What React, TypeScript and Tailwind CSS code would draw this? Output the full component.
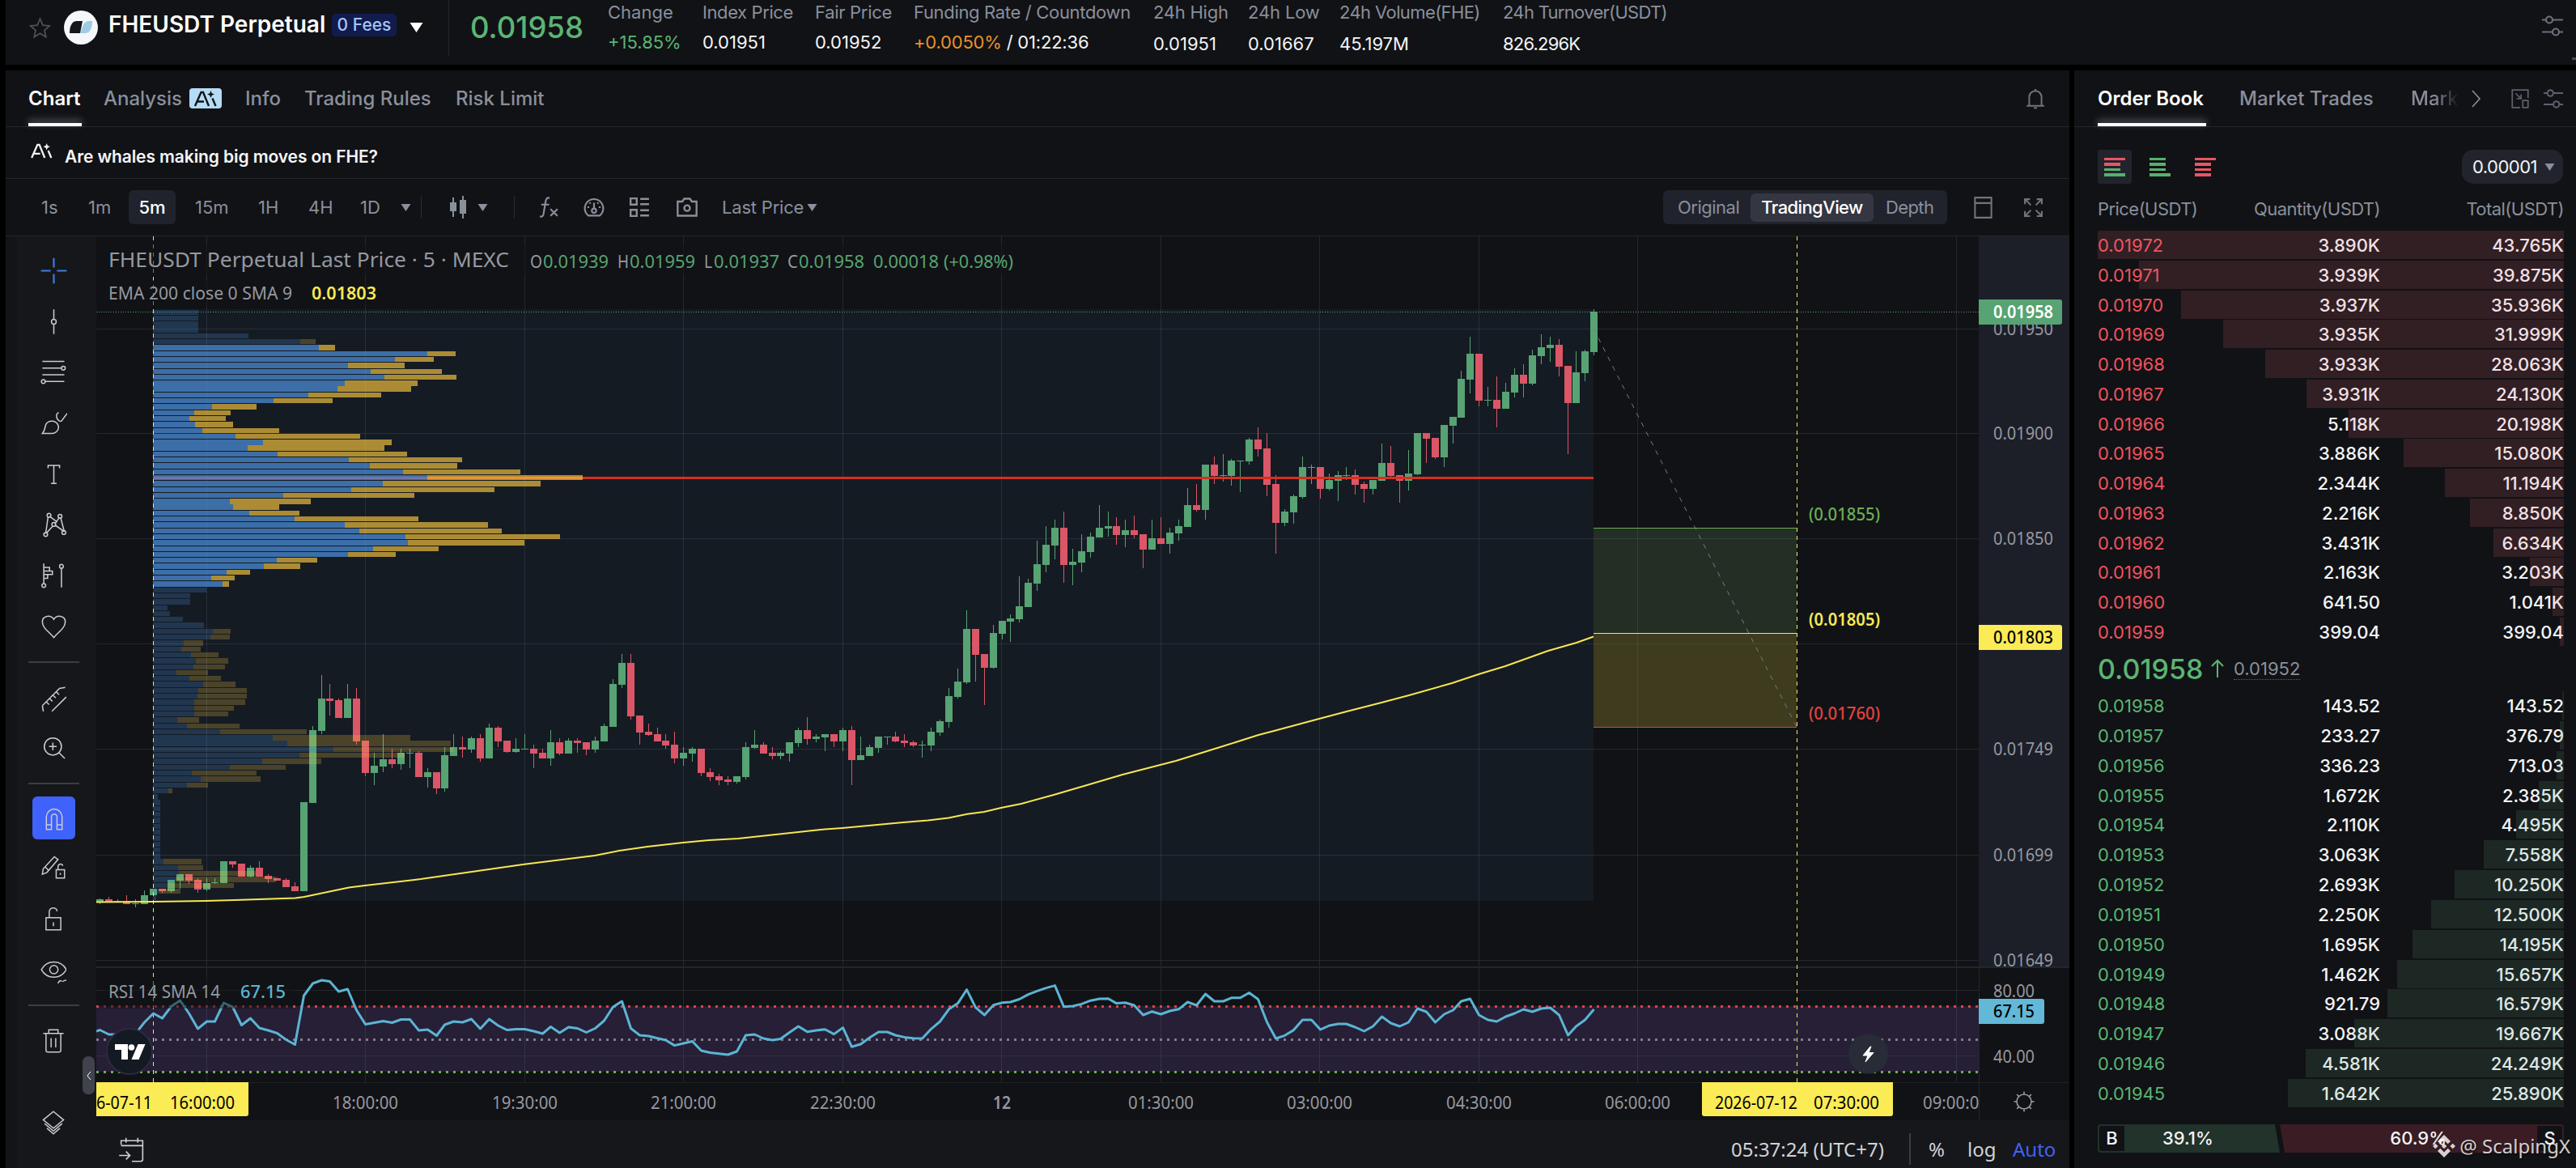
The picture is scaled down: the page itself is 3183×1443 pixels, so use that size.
import React from "react";

const UP = "#57a373";
const DOWN = "#db5667";

/* ---------- chart data (page pixel coordinates) ---------- */

const slotX = (k: number) => Math.round(189 + 10.922 * k);

// [direction, high, bodyTop, bodyBottom, low], first candle is slot -6
type Candle = [0 | 1, number, number, number, number];
const candles: Candle[] = [
  [1, 1110, 1111, 1114, 1117], [0, 1108, 1111, 1114, 1115], [1, 1111, 1113, 1114, 1115], [0, 1106, 1113, 1117, 1117],
  [1, 1111, 1116, 1117, 1121], [1, 1100, 1106, 1117, 1117], [1, 1098, 1098, 1106, 1106], [0, 1098, 1098, 1101, 1103],
  [1, 1087, 1087, 1101, 1103], [1, 1080, 1080, 1088, 1098], [0, 1080, 1080, 1088, 1092], [0, 1085, 1087, 1099, 1103],
  [1, 1085, 1091, 1099, 1101], [1, 1085, 1090, 1091, 1092], [1, 1064, 1064, 1091, 1091], [0, 1064, 1064, 1068, 1072],
  [0, 1067, 1067, 1083, 1083], [1, 1069, 1072, 1083, 1084], [0, 1064, 1072, 1083, 1083], [0, 1080, 1082, 1086, 1091],
  [0, 1084, 1085, 1088, 1088], [0, 1085, 1087, 1096, 1096], [0, 1090, 1095, 1101, 1101], [1, 991, 991, 1101, 1101],
  [1, 897, 902, 992, 992], [1, 834, 863, 903, 907], [0, 845, 863, 866, 884], [0, 863, 865, 887, 887],
  [1, 845, 863, 887, 887], [0, 850, 863, 916, 920], [0, 915, 915, 955, 959], [1, 930, 946, 955, 970],
  [1, 907, 938, 947, 954], [0, 925, 938, 944, 949], [1, 925, 930, 944, 951], [1, 925, 930, 931, 949],
  [0, 928, 930, 960, 960], [1, 949, 954, 960, 973], [0, 954, 954, 974, 981], [1, 923, 933, 974, 978],
  [1, 907, 923, 934, 934], [0, 910, 923, 926, 936], [1, 910, 912, 926, 930], [0, 907, 912, 937, 941],
  [1, 894, 899, 937, 937], [0, 897, 899, 916, 923], [0, 915, 915, 929, 930], [1, 912, 925, 929, 930],
  [1, 907, 925, 926, 926], [0, 920, 925, 931, 949], [0, 925, 930, 937, 937], [1, 902, 917, 937, 946],
  [0, 912, 917, 931, 933], [1, 912, 915, 931, 931], [0, 912, 915, 918, 930], [0, 917, 917, 926, 933],
  [1, 910, 915, 926, 930], [1, 894, 897, 916, 916], [1, 839, 845, 898, 898], [1, 808, 819, 846, 850],
  [0, 808, 819, 885, 889], [0, 884, 884, 905, 920], [0, 894, 904, 908, 909], [0, 899, 907, 916, 916],
  [0, 907, 915, 921, 925], [0, 904, 920, 937, 943], [1, 923, 930, 937, 946], [1, 923, 925, 931, 941],
  [0, 925, 925, 955, 959], [0, 949, 954, 960, 965], [0, 956, 959, 964, 970], [0, 959, 963, 966, 970],
  [1, 959, 959, 966, 968], [1, 917, 923, 960, 963], [1, 902, 920, 924, 925], [0, 917, 920, 931, 931],
  [0, 923, 930, 934, 938], [1, 928, 930, 934, 938], [1, 917, 917, 931, 941], [1, 899, 902, 918, 923],
  [0, 886, 902, 913, 920], [1, 907, 910, 913, 917], [1, 907, 907, 911, 928], [0, 907, 907, 916, 923],
  [1, 899, 902, 916, 928], [0, 897, 902, 939, 970], [1, 910, 933, 939, 939], [1, 920, 923, 934, 934],
  [1, 910, 910, 924, 930], [1, 910, 910, 911, 920], [0, 904, 910, 916, 917], [0, 907, 915, 918, 923],
  [0, 915, 917, 921, 923], [1, 915, 920, 921, 936], [1, 899, 904, 921, 928], [1, 889, 891, 905, 909],
  [1, 850, 860, 892, 899], [1, 826, 842, 861, 863], [1, 754, 777, 843, 845], [0, 777, 777, 809, 842],
  [0, 808, 808, 825, 871], [1, 772, 782, 825, 826], [1, 767, 767, 783, 790], [1, 759, 764, 768, 793],
  [1, 712, 749, 765, 769], [1, 715, 720, 750, 750], [1, 668, 697, 721, 730], [1, 650, 673, 698, 707],
  [1, 642, 652, 674, 691], [0, 632, 652, 698, 720], [1, 678, 694, 698, 723], [1, 660, 681, 695, 707],
  [1, 658, 663, 682, 689], [1, 624, 652, 664, 664], [1, 632, 650, 653, 663], [0, 639, 650, 661, 673],
  [1, 642, 655, 661, 676], [0, 637, 655, 661, 665], [0, 660, 660, 679, 702], [1, 642, 665, 679, 679],
  [0, 639, 665, 672, 672], [1, 652, 658, 672, 684], [1, 642, 650, 659, 668], [1, 603, 624, 651, 651],
  [0, 598, 624, 630, 632], [1, 574, 574, 630, 642], [0, 564, 574, 588, 598], [1, 561, 587, 588, 595],
  [1, 567, 569, 588, 600], [1, 569, 569, 570, 608], [1, 541, 543, 570, 574], [0, 528, 543, 555, 564],
  [0, 535, 554, 599, 613], [0, 587, 598, 646, 684], [1, 629, 632, 646, 650], [1, 611, 613, 633, 647],
  [1, 564, 577, 614, 616], [1, 574, 577, 578, 598], [0, 577, 577, 604, 616], [1, 585, 593, 604, 606],
  [1, 582, 587, 594, 619], [1, 577, 587, 588, 593], [0, 580, 587, 599, 611], [0, 595, 598, 604, 621],
  [1, 593, 593, 604, 611], [1, 548, 572, 594, 594], [0, 551, 572, 588, 589], [0, 587, 587, 594, 621],
  [1, 556, 585, 594, 606], [1, 535, 535, 586, 587], [0, 535, 535, 542, 572], [0, 541, 541, 565, 567],
  [1, 525, 525, 565, 577], [1, 515, 515, 526, 548], [1, 458, 468, 516, 516], [1, 416, 437, 469, 486],
  [0, 437, 437, 495, 502], [1, 478, 494, 495, 502], [0, 465, 494, 505, 528], [1, 473, 484, 505, 505],
  [1, 455, 463, 485, 491], [0, 450, 463, 474, 491], [1, 432, 439, 474, 476], [1, 413, 429, 440, 450],
  [1, 416, 426, 430, 447], [0, 419, 426, 453, 465], [0, 452, 452, 498, 561], [1, 434, 460, 498, 498],
  [1, 432, 434, 461, 471], [1, 382, 385, 435, 439],
];

// [up width, total width] for each of the 100 price rows
const profile: [number, number][] = [
  [56, 56], [56, 56], [56, 56], [56, 56], [118, 118], [182, 201],
  [205, 225], [339, 374], [299, 347], [241, 311], [269, 357], [286, 375], [237, 327], [228, 319], [192, 282], [149, 222],
  [73, 128], [51, 96], [45, 90], [52, 99], [61, 156], [102, 256], [136, 295], [117, 286], [154, 314], [242, 382],
  [268, 376], [309, 454], [339, 531], [284, 479], [245, 422], [161, 323], [95, 195], [99, 156], [119, 181], [175, 328],
  [237, 414], [255, 431], [312, 503], [315, 459], [272, 353], [241, 300], [153, 203], [137, 182], [91, 120], [72, 101],
  [86, 94],
  [66, 66], [46, 46], [46, 46], [18, 18], [21, 21], [37, 37], [63, 63], [74, 96], [71, 95], [38, 62], [35, 59],
  [47, 81], [53, 93], [50, 89], [29, 68], [45, 84], [62, 102], [56, 116], [55, 116], [51, 114], [51, 100], [51, 93],
  [30, 57], [42, 107], [83, 190], [148, 318], [166, 368], [223, 371], [181, 311], [135, 208], [95, 164], [48, 128],
  [59, 133], [42, 68], [19, 24], [6, 6], [9, 9], [9, 9], [9, 9], [9, 9], [9, 9], [9, 9], [9, 9], [9, 9], [9, 9],
  [9, 9], [13, 60], [31, 62], [32, 127], [28, 152], [19, 100], [8, 34], [4, 4],
];

const rsi = [
  1274, 1272.5, 1278, 1278, 1279, 1277, 1263, 1252, 1258, 1243.5, 1236, 1252, 1271, 1262, 1262, 1239, 1244, 1266.5, 1258,
  1270, 1273, 1276.5, 1284.5, 1290.5, 1230, 1215, 1211, 1212.5, 1225, 1222, 1248, 1265.5, 1263.5, 1261.5, 1263.5, 1259.5,
  1259.5, 1273, 1272, 1279.5, 1266, 1262, 1263, 1259, 1271, 1259, 1267, 1272.5, 1271.5, 1271.5, 1274, 1277, 1268.5, 1276,
  1269, 1270.5, 1275.5, 1270.5, 1261, 1244, 1237, 1270.5, 1279, 1280, 1282.7, 1285, 1291.6, 1289, 1286.5, 1298, 1300.5,
  1301.7, 1303, 1299, 1279, 1278, 1283, 1285, 1283.5, 1275.5, 1268, 1274.7, 1273, 1271.7, 1277.6, 1269.6, 1293.3, 1290,
  1282, 1275, 1275, 1279, 1281.4, 1282.7, 1283, 1271.3, 1262, 1246.8, 1239.6, 1222.7, 1244.7, 1254, 1241.7, 1238.7, 1238,
  1234.5, 1228.6, 1224.4, 1220.6, 1217.6, 1243.8, 1243, 1240.4, 1236.2, 1234, 1233.7, 1239.6, 1238.7, 1242, 1254, 1249.7,
  1253, 1249, 1246.8, 1238, 1242, 1228, 1237, 1237, 1232.8, 1232.8, 1226.5, 1234.5, 1262.8, 1283, 1279.3, 1272.6, 1260,
  1260, 1272, 1267, 1265, 1265, 1269, 1274, 1268, 1256, 1264, 1268, 1263, 1246, 1250, 1263, 1253, 1248, 1237, 1234, 1254,
  1260, 1262, 1256, 1252, 1247, 1250, 1246, 1245, 1254, 1279, 1268, 1260, 1247,
];

const ema =
  "119,1114.5 189,1114 255,1113 290,1112 365,1109.5 376,1108 431,1096.5 451,1094 520,1086 648,1067.7 735,1057 765,1051 800,1046 844,1041 876,1038 912,1036 1014,1025 1041,1023 1116,1016 1147,1013.4 1172,1010.4 1195,1005.8 1216,1003 1237,998 1262,993 1302,982 1343,970 1387,957 1453,940 1514,921 1555,908 1576,902.5 1630,888 1664,879 1707,868 1741,859 1794,844 1827,833 1860,823 1913,804 1948,794 1969,786.5";

const gridX = [255, 451, 648, 844, 1041, 1237, 1434, 1630, 1827, 2023, 2417];
const gridY = [406, 535, 665, 795, 925, 1056, 1186];

const times: [number, string][] = [
  [451, "18:00:00"], [648, "19:30:00"], [844, "21:00:00"], [1041, "22:30:00"], [1434, "01:30:00"], [1630, "03:00:00"],
  [1827, "04:30:00"], [2023, "06:00:00"],
];

const priceTicks: [number, string][] = [
  [406, "0.01950"], [535, "0.01900"], [665, "0.01850"], [925, "0.01749"], [1056, "0.01699"], [1186, "0.01649"],
];

function T({ x, y, w, s = 22, c = "#9598a1", b = 400, children }: {
  x: number; y: number; w: number; s?: number; c?: string; b?: number; children: React.ReactNode;
}) {
  return (
    <text x={x} y={y + s * 0.36} fontSize={s} fill={c} fontWeight={b} textLength={w} lengthAdjust="spacingAndGlyphs" xmlSpace="preserve">
      {children}
    </text>
  );
}

function Chart() {
  return (
    <svg className="block h-[1092px] w-[2438px] font-['Noto_Sans',sans-serif]" viewBox="119 292 2438 1092">
      <g shapeRendering="crispEdges">
        <rect x="189" y="382" width="1780" height="731" fill="#151b23" />
        <rect x="1969" y="652" width="251" height="130" fill="#232f25" />
        <rect x="1969" y="782" width="251" height="116" fill="#3e3b1f" />
        <rect x="119" y="1243" width="2326" height="81" fill="#261f36" />
        {gridX.map((x) => (
          <rect key={x} x={x} y="292" width="1" height="1045" fill="#787b9a" opacity=".2" />
        ))}
        {gridY.map((y) => (
          <rect key={y} x="119" y={y} width="2326" height="1" fill="#787b9a" opacity=".2" />
        ))}
        <rect x="119" y="1223" width="2326" height="1" fill="#24262d" />
        <rect x="119" y="1304" width="2326" height="1" fill="#332c47" />
        <rect x="1969" y="652" width="251" height="1" fill="#6cae55" />
        <rect x="1969" y="782" width="251" height="1" fill="#f9e955" />
        <rect x="1969" y="898" width="251" height="1" fill="#e0433f" />
        <rect x="2445" y="292" width="112" height="903" fill="#1d1f28" />
        <rect x="2445" y="1195" width="1" height="189" fill="#24262d" />
        <rect x="119" y="1194" width="2438" height="2" fill="#24262d" />
        <rect x="119" y="1337" width="2438" height="1" fill="#1f2127" />
        {candles.map(([up, h, t, b, l], i) => {
          const x = slotX(i - 6);
          const fill = up ? UP : DOWN;
          return (
            <g key={i} fill={fill}>
              <rect x={x} y={h} width="1" height={Math.max(1, l - h)} />
              <rect x={x - 4} y={t} width="9" height={Math.max(1, b - t)} />
            </g>
          );
        })}
        <line x1="119" x2="2445" y1="385.5" y2="385.5" stroke={UP} strokeDasharray="1 2" />
      </g>
      <polyline points={ema} fill="none" stroke="#f7e752" strokeWidth="2" />
      <g shapeRendering="crispEdges">
        <rect x="189" y="589" width="1780" height="3" fill="#d6301f" />
        {profile.map(([u, t], i) => {
          const y = 382.5 + 7.3 * i;
          const h = Math.round(y + 6.4) - Math.round(y);
          const bright = i > 5 && i < 47;
          return (
            <g key={i}>
              <rect x="189" y={Math.round(y)} width={u} height={h} fill="#4c8fdd" opacity={bright ? 0.72 : 0.24} />
              <rect x={189 + u} y={Math.round(y)} width={t - u} height={h} fill="#f6c53f" opacity={bright ? 0.67 : 0.24} />
            </g>
          );
        })}
      </g>
      <line x1="1969" y1="406" x2="2220" y2="898" stroke="#787b86" strokeDasharray="6 7" />
      <g shapeRendering="crispEdges" stroke="#f9e955">
        <line x1="189.5" x2="189.5" y1="292" y2="1337" strokeDasharray="5 5" />
        <line x1="2220.5" x2="2220.5" y1="292" y2="1337" strokeDasharray="5 5" />
      </g>
      <g strokeWidth="3" strokeDasharray="3 6" shapeRendering="crispEdges">
        <line x1="119" x2="2445" y1="1243.5" y2="1243.5" stroke="#e0433f" />
        <line x1="119" x2="2445" y1="1284.5" y2="1284.5" stroke="#7d7f8b" />
        <line x1="119" x2="2445" y1="1324.5" y2="1324.5" stroke="#6cae55" />
      </g>
      <polyline
        points={rsi.map((y, i) => `${i === 0 ? 119 : slotX(i - 7) + 0.5},${y}`).join(" ")}
        fill="none"
        stroke="#5cb4d4"
        strokeWidth="3"
        strokeLinejoin="round"
      />
      <g fill="#111215" opacity=".5">
        <rect x="127" y="302" width="1133" height="38" />
        <rect x="127" y="346" width="348" height="32" />
        <rect x="127" y="1208" width="235" height="38" />
      </g>
      <T x={134} y={321} w={495} s={26}>FHEUSDT Perpetual Last Price · 5 · MEXC</T>
      <T x={655} y={323} w={15}>O</T>
      <T x={671} y={323} w={81} c={UP}>0.01939</T>
      <T x={763} y={323} w={14}>H</T>
      <T x={778} y={323} w={81} c={UP}>0.01959</T>
      <T x={870} y={323} w={10}>L</T>
      <T x={882} y={323} w={81} c={UP}>0.01937</T>
      <T x={973} y={323} w={13}>C</T>
      <T x={987} y={323} w={81} c={UP}>0.01958</T>
      <T x={1079} y={323} w={81} c={UP}>0.00018</T>
      <T x={1166} y={323} w={86} c={UP}>(+0.98%)</T>
      <T x={134} y={362} w={227}>EMA 200 close 0 SMA 9</T>
      <T x={385} y={362} w={80} c="#f9e955" b={600}>0.01803</T>
      <T x={134} y={1225} w={138}>RSI 14 SMA 14</T>
      <T x={297} y={1225} w={56} c="#5cb4d4" b={500}>67.15</T>
      <T x={2235} y={635} w={88} c="#6cae55" s={21} b={500}>(0.01855)</T>
      <T x={2235} y={765} w={88} c="#f9e955" s={21} b={600}>(0.01805)</T>
      <T x={2235} y={881} w={88} c="#e0433f" s={21} b={500}>(0.01760)</T>
      {priceTicks.map(([y, s]) => (
        <T key={y} x={2463} y={y} w={74} s={21}>{s}</T>
      ))}
      <T x={2463} y={1224} w={51} s={21}>80.00</T>
      <T x={2463} y={1305} w={51} s={21}>40.00</T>
      <rect x="2440" y="370" width="108" height="31" rx="3" fill={UP} clipPath="inset(0 0 0 5px)" />
      <rect x="2440" y="772" width="108" height="31" rx="3" fill="#fbeb55" clipPath="inset(0 0 0 5px)" />
      <rect x="2440" y="1234" width="86" height="31" rx="3" fill="#62b8d6" clipPath="inset(0 0 0 5px)" />
      <T x={2463} y={385} w={74} s={21} c="#fff" b={600}>0.01958</T>
      <T x={2463} y={787} w={74} s={21} c="#000" b={500}>0.01803</T>
      <T x={2463} y={1249} w={51} s={21} c="#000" b={500}>67.15</T>
      {times.map(([x, s]) => (
        <T key={x} x={x - 40} y={1362} w={81} s={21}>{s}</T>
      ))}
      <T x={1227} y={1362} w={22} s={21} b={600}>12</T>
      <svg x="2340" y="1338" width="105" height="46" viewBox="2340 1338 105 46">
        <T x={2376} y={1362} w={81} s={21}>09:00:00</T>
      </svg>
      <path d="M119 1337H307V1376a3 3 0 0 1-3 3H119Z" fill="#fbeb55" />
      <T x={119} y={1362} w={69} s={21} c="#000">6-07-11</T>
      <T x={210} y={1362} w={80} s={21} c="#000">16:00:00</T>
      <path d="M2103 1337H2339V1376a3 3 0 0 1-3 3H2106a3 3 0 0 1-3-3Z" fill="#fbeb55" />
      <T x={2119} y={1362} w={102} s={21} c="#000">2026-07-12</T>
      <T x={2241} y={1362} w={81} s={21} c="#000">07:30:00</T>
      <g stroke="#9598a1" strokeWidth="1.6" fill="none">
        <circle cx="2501" cy="1361" r="9" />
        {[0, 45, 90, 135, 180, 225, 270, 315].map((a) => (
          <line key={a} x1="2501" x2="2501" y1="1352" y2="1348.5" transform={`rotate(${a} 2501 1361)`} />
        ))}
      </g>
      <circle cx="160" cy="1299" r="28" fill="#131a22" stroke="#2d2942" strokeWidth="2" />
      <g fill="#fff">
        <path d="M142 1290h16v19h-8v-12h-8z" />
        <circle cx="162.500" cy="1294" r="3.800" />
        <path d="M170.500 1290h9l-8 19h-9z" />
      </g>
      <circle cx="2308.500" cy="1302" r="24.500" fill="#272c37" />
      <path d="M2311 1293l-9 11h6l-3 8 10-11.500h-6l3-7.500z" fill="#fff" stroke="#fff" />
    </svg>
  );
}

/* ---------- icons ---------- */

function Ico({ d, cls = "size-8", v = 28, sw = 1.3, fill }: { d: string; cls?: string; v?: number; sw?: number; fill?: string }) {
  return (
    <svg className={`${cls} shrink-0`} viewBox={`0 0 ${v} ${v}`} fill="none" stroke="currentColor" strokeWidth={sw}>
      <path d={d} />
      {fill && <path d={fill} fill="currentColor" stroke="none" />}
    </svg>
  );
}

function Tri({ cls = "h-[9px] w-[13px] text-[#8a8f9c]" }: { cls?: string }) {
  return (
    <svg className={`${cls} shrink-0`} viewBox="0 0 12 9">
      <path d="M0 0h12L6 9z" fill="currentColor" />
    </svg>
  );
}

function AiMark({ cls }: { cls: string }) {
  return (
    <svg className={`${cls} shrink-0`} viewBox="0 0 28 20" fill="none" stroke="currentColor" strokeWidth="2.4">
      <path d="M1 19 8.500 2h2.500l7 17M4.500 13.500H12M22.500 9.500l4 9.500" />
      <path d="M20.500 0l1.300 3.200L25 4.500l-3.200 1.300-1.300 3.200-1.300-3.200L16 4.500l3.200-1.300z" fill="currentColor" stroke="none" />
    </svg>
  );
}

function Sliders({ cls }: { cls: string }) {
  return (
    <svg className={`${cls} shrink-0`} viewBox="0 0 26 26" fill="none" stroke="currentColor" strokeWidth="2.200">
      <circle cx="9" cy="5.500" r="4" />
      <path d="M0 5.500h5M13 5.500h13M0 20.500h13M21 20.500h5" />
      <circle cx="17" cy="20.500" r="4" />
    </svg>
  );
}

const tools: [string, number][] = [
  ["M14 2v9M14 17v9M2 14h9M17 14h9", 0],
  ["M14 1v10M14 17v10M11.500 14a2.500 2.500 0 1 0 5 0a2.500 2.500 0 1 0-5 0", 1],
  ["M2 3h23M2 10h20M22 10a2 2 0 1 0 4 0a2 2 0 1 0-4 0M2 17h23M5 24h20M1 24a2 2 0 1 0 4 0a2 2 0 1 0-4 0", 1],
  ["M2 25h10a7 6.500 0 1 0-6-10c-1.500 3-1 7-4 10zM17 5c-1 5 3 8 5 7l6-8M17 5l2-2", 1],
  ["M8 8V5h12v3M14 5v19M11 24h6", 1],
  ["M8 5.500 5.500 23M9.500 5l8 6M20 6l-5 7M13 15l-7 8M15 14l10 7M21 6l4 15M7 4a2 2 0 1 0 4 0a2 2 0 1 0-4 0M18.500 5a2 2 0 1 0 4 0a2 2 0 1 0-4 0M3.500 24a2 2 0 1 0 4 0a2 2 0 1 0-4 0M22.500 22a2 2 0 1 0 4 0a2 2 0 1 0-4 0M12 13.500a2 2 0 1 0 4 0a2 2 0 1 0-4 0", 1],
  ["M3.500 1v21M3.500 5h6v4h-6M3.500 9h9v3.500h-9M3.500 12.500h4v4h-4M1.500 24a2 2 0 1 0 4 0a2 2 0 1 0-4 0M22 6v20M20 4a2 2 0 1 0 4 0a2 2 0 1 0-4 0", 1],
  ["M14 26C9 20 2 16 2 9.500 2 3 11 1.500 14 7c3-5.500 12-4 12 2.500C26 16 19 20 14 26z", 1],
];

const tools2 = [
  "M2 21 20 3l6-1M2 21l1 6M6 17l3 3M9.500 13.500l3 3M13 10l3 3M16.500 6.500l3 3M12 27 27 12",
  "M4 13a9 9 0 1 0 18 0a9 9 0 1 0-18 0M13 9v8M9 13h8M19.500 19.500l6 6",
];

const tools3 = [
  "M2 22l1-6L15 3l4 3L7 20zM5 14l4 4M17 26V17h9v9zM19 17v-3c0-4 5-4 5-1M21.500 20.500v2",
  "M6 13h16v13H6zM9.500 13V7c0-6 8-6 8.500-1M14 18v4",
  "M1 13C7 2 22 2 28 13 22 24 7 24 1 13zM10 13a4.500 4.500 0 1 0 9 0a4.500 4.500 0 1 0-9 0M19 28c1-3 3-4 4-2M24 26c1-1 2-1.500 4-1.500",
];

const cell = "flex shrink-0 items-center whitespace-nowrap";

/* ---------- order book ---------- */

const asks: [string, string, string][] = [
  ["0.01972", "3.890K", "43.765K"], ["0.01971", "3.939K", "39.875K"], ["0.01970", "3.937K", "35.936K"],
  ["0.01969", "3.935K", "31.999K"], ["0.01968", "3.933K", "28.063K"], ["0.01967", "3.931K", "24.130K"],
  ["0.01966", "5.118K", "20.198K"], ["0.01965", "3.886K", "15.080K"], ["0.01964", "2.344K", "11.194K"],
  ["0.01963", "2.216K", "8.850K"], ["0.01962", "3.431K", "6.634K"], ["0.01961", "2.163K", "3.203K"],
  ["0.01960", "641.50", "1.041K"], ["0.01959", "399.04", "399.04"],
];

const bids: [string, string, string][] = [
  ["0.01958", "143.52", "143.52"], ["0.01957", "233.27", "376.79"], ["0.01956", "336.23", "713.03"],
  ["0.01955", "1.672K", "2.385K"], ["0.01954", "2.110K", "4.495K"], ["0.01953", "3.063K", "7.558K"],
  ["0.01952", "2.693K", "10.250K"], ["0.01951", "2.250K", "12.500K"], ["0.01950", "1.695K", "14.195K"],
  ["0.01949", "1.462K", "15.657K"], ["0.01948", "921.79", "16.579K"], ["0.01947", "3.088K", "19.667K"],
  ["0.01946", "4.581K", "24.249K"], ["0.01945", "1.642K", "25.890K"],
];

const amount = (s: string) => parseFloat(s) * (s.endsWith("K") ? 1000 : 1);

function Row({ row, ask }: { row: [string, string, string]; ask: boolean }) {
  return (
    <div className="relative flex h-[35px] w-[576px] items-center pt-[2px] text-[22px] text-[#f4f5f7]">
      <span className={`w-[174px] ${ask ? "text-[#f0525f]" : "text-[#5bb574]"}`}>{row[0]}</span>
      <span className="w-[175px] text-right font-medium">{row[1]}</span>
      <span className="w-[227px] text-right font-medium">{row[2]}</span>
      <div
        className={`absolute inset-y-0 right-0 ${ask ? "bg-[#ed6980]/15" : "bg-[#68a586]/15"}`}
        style={{ width: `${(amount(row[2]) / 43765) * 100}%` }}
      />
    </div>
  );
}

function Bars({ colors, widths }: { colors: string[]; widths: string[] }) {
  return (
    <span className="flex flex-col gap-[3px]">
      {colors.map((c, i) => (
        <span key={i} className={`h-[3.500px] ${c} ${widths[i]}`} />
      ))}
    </span>
  );
}

function OrderBook() {
  const r = "bg-[#ea5564]";
  const g = "bg-[#57b06f]";
  return (
    <section className="relative flex w-[620px] shrink-0 flex-col bg-[#111215]">
      <div className="flex h-[70px] items-center border-b border-[#24262c] pl-[29px] text-[24px] font-medium text-[#8a8f9c]">
        <span className={`${cell} relative h-full w-[175px] font-semibold text-white`}>
          Order Book
          <span className="absolute bottom-0 left-0 h-[4px] w-[134px] bg-white shadow-[0_-3px_8px_rgba(200,210,240,.5)]" />
        </span>
        <span className={`${cell} w-[212px]`}>Market Trades</span>
        <span className={`${cell} w-[60px] bg-linear-to-r from-[#8a8f9c] via-[#8a8f9c] to-[#111215] bg-clip-text text-transparent`}>Mark</span>
        <Ico cls="ml-[10px] h-[24px] w-[20px] text-[#8a8f9c]" v={20} sw={1.600} d="M6 0l9 10-9 10" />
        <span className="ml-[32px] mr-[16px] flex text-[#5c616c]">
          <Ico cls="size-[26px]" v={24} sw={1.600} d="M12 22H3V2h18v9M7 6l6 6M13 7v5H8M15 14h6v8h-6z" />
        </span>
        <Sliders cls="h-[24px] w-[24px] text-[#5c616c]" />
      </div>
      <div className="mt-[28px] flex h-[42px] items-center pl-[29px]">
        <span className={`${cell} h-[42px] w-[42px] justify-center rounded-[3px] bg-[#22242d]`}>
          <Bars colors={[r, r, g, g]} widths={["w-[26px]", "w-[20px]", "w-[20px]", "w-[26px]"]} />
        </span>
        <span className="ml-[22px] w-[56px]"><Bars colors={[g, g, g, g]} widths={["w-[20px]", "w-[20px]", "w-[20px]", "w-[26px]"]} /></span>
        <span><Bars colors={[r, r, r, r]} widths={["w-[26px]", "w-[20px]", "w-[20px]", "w-[20px]"]} /></span>
        <span className="ml-auto mr-[16px] flex h-[42px] w-[125px] items-center justify-between rounded-[14px] bg-[#22242d] pl-[13px] pr-[10px] text-[22px] tracking-[-0.500px] text-[#f4f5f7]">
          0.00001 <Tri />
        </span>
      </div>
      <div className="ml-[29px] mt-[13px] flex h-[36px] w-[576px] items-center text-[22px] tracking-[-0.550px] text-[#8a8f9c]">
        <span className="w-[149px]">Price(USDT)</span>
        <span className="w-[200px] text-right">Quantity(USDT)</span>
        <span className="w-[227px] text-right">Total(USDT)</span>
      </div>
      <div className="ml-[29px] mt-[9px] flex h-[513px] flex-col justify-between">
        {asks.map((a) => <Row key={a[0]} row={a} ask />)}
      </div>
      <div className="ml-[29px] flex h-[56px] items-center">
        <span className="w-[136px] text-[34px] font-medium text-[#5bb574]">0.01958</span>
        <Ico cls="size-[24px] text-[#5bb574]" v={24} sw={2} d="M12 23V2M5 9l7-7 7 7" />
        <span className="ml-[8px] border-b border-dotted border-[#5c616c] text-[22px] leading-[26px] text-[#8a8f9c]">0.01952</span>
      </div>
      <div className="ml-[29px] flex h-[514px] flex-col justify-between">
        {bids.map((b) => <Row key={b[0]} row={b} ask={false} />)}
      </div>
      <div className="relative ml-[29px] mt-[21px] flex h-[35px] w-[576px] justify-between text-[22px] font-medium text-[#f4f5f7]">
        <div className="flex w-[225px] items-center rounded-l-[4px] bg-[#21332a] [clip-path:polygon(0_0,219px_0,225px_100%,0_100%)]">
          <span className="ml-[2px] flex h-[31px] w-[31px] items-center justify-center rounded-l-[3px] bg-[#111215]">B</span>
          <span className="ml-[47px]">39.1%</span>
        </div>
        <div className="flex w-[351px] items-center justify-end rounded-r-[4px] bg-[#3a1d24] [clip-path:polygon(0_0,100%_0,100%_100%,6px_100%)]">
          <span className="mr-[112px]">60.9%</span>
          <span className="mr-[2px] flex h-[31px] w-[31px] items-center justify-center rounded-r-[3px] bg-[#111215]">S</span>
        </div>
      </div>
      <div className="absolute bottom-[9px] right-[7px] flex items-center gap-[5px] whitespace-nowrap font-['Noto_Sans',sans-serif] text-[24px] leading-[36px] text-white/80 [text-shadow:1px_1px_2px_#000]">
        <svg className="size-[28px]" viewBox="0 0 28 28" fill="currentColor">
          <path d="M14 0l8 8-3.300 3.300L14 6.600l-4.700 4.700L6 8zM3.300 10.700L6.600 14l-3.300 3.300L0 14zM24.700 10.700L28 14l-3.300 3.300L21.400 14zM14 10.700l3.300 3.300-3.300 3.300-3.300-3.300zM9.300 16.700l4.700 4.700 4.700-4.700L22 20l-8 8-8-8z" />
        </svg>
        <span>@ ScalpingX</span>
      </div>
    </section>
  );
}

/* ---------- page ---------- */

const stats: [string, React.ReactNode, string, string, string][] = [
  ["Change", <span className="text-[#5bb574]">+15.85%</span>, "w-[117px]", "", ""],
  ["Index Price", "0.01951", "w-[139px]", "tracking-[-0.400px]", ""],
  ["Fair Price", "0.01952", "w-[122px]", "tracking-[-0.300px]", ""],
  ["Funding Rate / Countdown", <><span className="text-[#e8912d]">+0.0050%</span> / 01:22:36</>, "w-[296px]", "tracking-[-0.330px]", "tracking-[-0.200px]"],
  ["24h High", "0.01951", "w-[117px]", "tracking-[-0.250px]", ""],
  ["24h Low", "0.01667", "w-[113px]", "tracking-[-0.150px]", ""],
  ["24h Volume(FHE)", "45.197M", "w-[202px]", "tracking-[-0.600px]", ""],
  ["24h Turnover(USDT)", "826.296K", "w-[220px]", "tracking-[-0.700px]", "tracking-[-0.800px]"],
];

function Header() {
  return (
    <header className="relative ml-[7px] flex h-[80px] bg-[#111215]">
      <div className="flex h-[68px] w-[547px] items-center pl-[29px]">
        <Ico cls="size-[27px] text-[#4d525d]" v={24} sw={1.500} d="M12 2l3 7 7.500.7-5.700 5 1.700 7.300L12 18l-6.500 4 1.700-7.300-5.700-5L9 9z" />
        <svg className="ml-[16px] size-[42px] shrink-0" viewBox="0 0 42 42">
          <circle cx="21" cy="21" r="21" fill="#f5f7fa" />
          <path d="M7 28c0-9 3-15 9-15h7l-3 15z" fill="#15171c" />
          <path d="M35 13c0 9-3 15-9 15h-6l3-8c2-5 4-7 8-7z" fill="#9fcbe6" />
        </svg>
        <span className={`${cell} -mt-[8px] ml-[13px] w-[276px] text-[28px] font-semibold text-white`}>FHEUSDT Perpetual</span>
        <span className={`${cell} -mt-[6px] h-[28px] w-[80px] justify-center rounded-[5px] bg-[#111b4d] text-[21px] font-medium text-[#a3c4f7]`}>0 Fees</span>
        <Tri cls="ml-[16px] h-[12px] w-[17px] text-white" />
      </div>
      <div className="h-[69px] w-px bg-[#24262c]" />
      <div className="ml-[26px] flex h-[68px] w-[170px] items-center text-[36.500px] font-medium text-[#5bb574]">0.01958</div>
      {stats.map(([l, v, w, lt, vt], i) => (
        <div key={l} className={`flex shrink-0 flex-col whitespace-nowrap text-[22px] leading-[30px] ${w}`}>
          <span className={`text-[#8a8f9c] ${lt}`}>{l}</span>
          <span className={`text-[#f4f5f7] ${vt} ${i > 3 ? "mt-[9px]" : "mt-[7px]"}`}>{v}</span>
        </div>
      ))}
      <div className="ml-auto flex items-start pr-[16px] pt-[19px]"><Sliders cls="size-[26px] text-[#6b707b]" /></div>
      <span className="absolute right-0 top-[71px] h-[3px] w-[5px] bg-[#4a4d55]" />
    </header>
  );
}

function Toolbar() {
  return (
    <div className="flex h-[71px] items-center border-b border-[#24262c] text-[22px] text-[#8a8f9c]">
      <span className={`${cell} ml-[44px] w-[58px]`}>1s</span>
      <span className={`${cell} w-[50px]`}>1m</span>
      <span className={`${cell} h-[42px] w-[58px] justify-center rounded-[6px] bg-[#20232c] font-medium text-white`}>5m</span>
      <span className={`${cell} ml-[24px] w-[78px]`}>15m</span>
      <span className={`${cell} w-[62px]`}>1H</span>
      <span className={`${cell} w-[64px]`}>4H</span>
      <span className={`${cell} w-[50px]`}>1D</span>
      <Tri />
      <span className="ml-[12px] h-[28px] w-px bg-[#2a2d34]" />
      <Ico cls="ml-[31px] h-[28px] w-[28px]" v={28} sw={2} d="M8 2v24M20 0v28" fill="M4 8h8v11H4zM16 5h8v17h-8z" />
      <Tri cls="ml-[10px] h-[9px] w-[13px] text-[#8a8f9c]" />
      <span className="ml-[32px] h-[28px] w-px bg-[#2a2d34]" />
      <Ico cls="ml-[29px] size-[26px]" v={24} sw={2} d="M13 1.500c-3-1-4 1-4.500 4L6 20c-.5 2.500-2 3-4 2.500M3.500 9h9M14 14l8 8M22 14l-8 8" />
      <Ico cls="ml-[30px] size-[26px]" v={24} sw={2} d="M5.500 21.500a10.500 10.500 0 1 1 13 0zM12 7v7M9.500 16a2.500 2.500 0 1 0 5 0a2.500 2.500 0 1 0-5 0M4.500 12h2M17.500 12h2M7 6.500l1 1.500M17 6.500L16 8" />
      <Ico cls="ml-[30px] size-[26px]" v={24} sw={2.200} d="M2 2h7v7H2zM2 15h7v7H2zM13 2.500h10M13 8.500h10M13 15.500h10M13 21.500h10" />
      <Ico cls="ml-[32px] size-[28px]" v={24} sw={2} d="M2 6h5l2-3h6l2 3h5v15H2zM9 13a3 3 0 1 0 6 0a3 3 0 1 0-6 0" />
      <span className={`${cell} ml-[29px] w-[105px] tracking-[-0.200px]`}>Last Price</span>
      <Tri />
      <span className={`${cell} ml-auto h-[42px] w-[351px] rounded-[6px] bg-[#20232c] pl-[18px]`}>
        <span className={`${cell} w-[90px] tracking-[-0.500px]`}>Original</span>
        <span className={`${cell} h-[35px] w-[152px] justify-center rounded-[6px] bg-[#343642] font-medium tracking-[-0.600px] text-white`}>TradingView</span>
        <span className="ml-[15px] tracking-[-0.600px]">Depth</span>
      </span>
      <Ico cls="ml-[31px] size-[27px] text-[#70747f]" v={24} sw={1.800} d="M3 1h18v22H3zM1 0M2 7h20" />
      <Ico cls="ml-[36px] mr-[32px] size-[25px] text-[#70747f]" v={24} sw={2} d="M9 9L2 2M2 8V2h6M15 9l7-7M16 2h6v6M9 15l-7 7M2 16v6h6M15 15l7 7M22 16v6h-6" />
    </div>
  );
}

function ToolRail() {
  const slot = "flex h-[62.800px] shrink-0 items-center justify-center";
  return (
    <div className="relative flex w-[98px] shrink-0 flex-col bg-[#16171b] pr-[8px] text-[#c9cbd1]">
      <div className="mt-[11px] flex flex-col">
        {tools.map(([d, m], i) => (
          <span key={i} className={slot}>
            <Ico cls={m ? "size-[33px]" : "size-[37px] text-[#3f7fe0]"} d={d} sw={m ? 1.300 : 1.600} />
          </span>
        ))}
      </div>
      <div className="ml-[14px] mt-[12px] h-[2px] w-[63px] bg-[#3b3d44]" />
      <div className="mt-[14px] flex flex-col">
        {tools2.map((d, i) => <span key={i} className="flex h-[60px] items-center justify-center"><Ico d={d} cls="size-[33px]" /></span>)}
      </div>
      <div className="ml-[14px] mt-[14px] h-[2px] w-[63px] bg-[#3b3d44]" />
      <div className="ml-[19px] mt-[15px] flex h-[53px] w-[53px] items-center justify-center rounded-[6px] bg-[#3f62fa]">
        <Ico cls="size-[32px]" d="M5.500 26V12.500a8.500 8.500 0 0 1 17 0V26h-5.500V12.500a3 3 0 0 0-6 0V26zM5.500 21H11M17 21h5.500" />
      </div>
      <div className="mt-[2px] flex flex-col">
        {tools3.map((d, i) => <span key={i} className="flex h-[64px] items-center justify-center"><Ico d={d} cls="size-[32px]" /></span>)}
      </div>
      <div className="ml-[14px] mt-[10px] h-[2px] w-[63px] bg-[#3b3d44]" />
      <div className="mt-[27px] flex justify-center"><Ico cls="size-[32px]" d="M3 6h22M9 6V2h10v4M6 6v18a2 2 0 0 0 2 2h12a2 2 0 0 0 2-2V6M11.500 11v10M16.500 11v10" /></div>
      <div className="mt-[69px] flex justify-center"><Ico cls="size-[32px]" d="M14 2l11 9-11 9L3 11zM4.500 15l9.500 8 9.500-8M7 20l7 6 7-6" /></div>
      <div className="absolute left-[81px] top-[1013px] flex h-[47px] w-[15px] items-center justify-center rounded-[7px] bg-[#40434c] text-white">
        <svg className="h-[12px] w-[6px]" viewBox="0 0 6 12" fill="none" stroke="currentColor"><path d="M5 1L1 6l4 5" /></svg>
      </div>
    </div>
  );
}

export default function App() {
  return (
    <div className="h-[1443px] w-[3183px] overflow-hidden bg-black font-['Inter',sans-serif]">
      <Header />
      <div className="mt-[7px] flex h-[1356px] gap-[6px] pl-[7px]">
        <section className="flex w-[2550px] shrink-0 flex-col bg-[#111215]">
          <div className="flex h-[70px] items-center border-b border-[#24262c] pl-[28px] text-[24px] font-medium text-[#8a8f9c]">
            <span className={`${cell} relative h-full w-[93px] font-semibold text-white`}>
              Chart
              <span className="absolute bottom-0 left-0 h-[4px] w-[66px] bg-white shadow-[0_-3px_8px_rgba(200,210,240,.5)]" />
            </span>
            <span className={`${cell} w-[106px]`}>Analysis</span>
            <span className={`${cell} mr-[29px] h-[25px] w-[40px] justify-center rounded-[4px] bg-[#b4dcf6] text-[#111215]`}><AiMark cls="h-[20px] w-[30px]" /></span>
            <span className={`${cell} w-[73px]`}>Info</span>
            <span className={`${cell} w-[187px]`}>Trading Rules</span>
            <span className={cell}>Risk Limit</span>
            <Ico cls="ml-auto mr-[29px] size-[26px] text-[#70747f]" v={24} sw={1.800} d="M2 20h20M5 20V10a7 7 0 0 1 14 0v10M12 3V1M10 22.500h4" />
          </div>
          <div className="flex h-[64px] items-center border-b border-[#24262c] pl-[30px] text-[21px] font-semibold text-[#f4f5f7]">
            <AiMark cls="-mt-[5px] mr-[14px] h-[19px] w-[29px]" />
            <span className="mt-[10px] tracking-[-0.100px]">Are whales making big moves on FHE?</span>
          </div>
          <Toolbar />
          <div className="flex h-[1151px] bg-[#131417] pl-[14px]">
            <ToolRail />
            <div className="flex flex-col bg-[#111215]">
              <Chart />
              <div className="flex h-[59px] items-center bg-[#16171b] pl-[27px] font-['Noto_Sans',sans-serif] text-[24px] text-[#d1d3d8]">
                <Ico cls="mt-[10px] size-[34px]" d="M3 10V6h22v19a2 2 0 0 1-2 2h-9M3 11h22M8 3v5M20 3v5M1 21h11M8 17l4 4-4 4" />
                <span className={`${cell} ml-auto mt-[12px] w-[220px]`}>05:37:24 (UTC+7)</span>
                <span className="mt-[12px] h-[39px] w-[2px] bg-[#3b3d44]" />
                <span className={`${cell} ml-[22px] mt-[12px] w-[48px]`}>%</span>
                <span className={`${cell} mt-[12px] w-[56px]`}>log</span>
                <span className={`${cell} mt-[12px] w-[70px] text-[#3f62fa]`}>Auto</span>
              </div>
            </div>
          </div>
        </section>
        <OrderBook />
      </div>
    </div>
  );
}
